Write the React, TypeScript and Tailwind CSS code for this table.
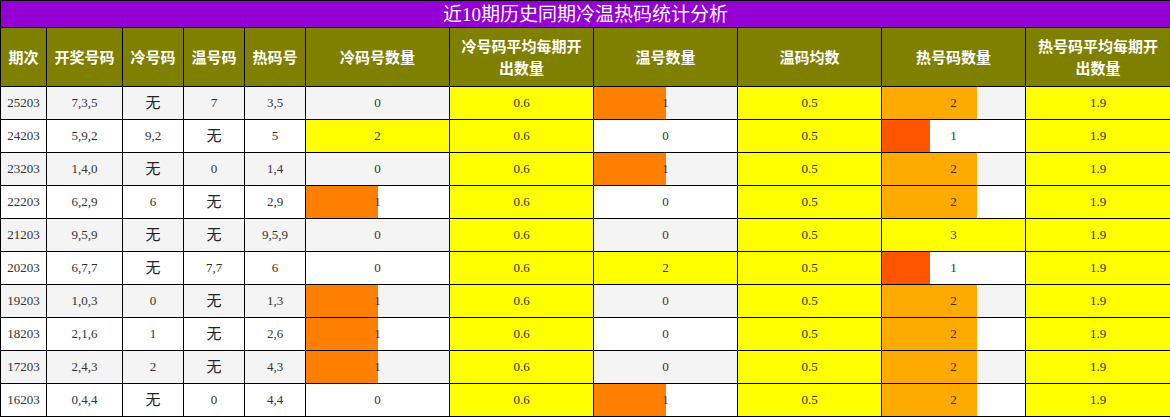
import React from "react";

type Row = {
  id: string;
  draw: string;
  cold: string;
  warm: string;
  hot: string;
  coldN: number;
  warmN: number;
  hotN: number;
};

const rows: Row[] = [
  { id: "25203", draw: "7,3,5", cold: "无", warm: "7", hot: "3,5", coldN: 0, warmN: 1, hotN: 2 },
  { id: "24203", draw: "5,9,2", cold: "9,2", warm: "无", hot: "5", coldN: 2, warmN: 0, hotN: 1 },
  { id: "23203", draw: "1,4,0", cold: "无", warm: "0", hot: "1,4", coldN: 0, warmN: 1, hotN: 2 },
  { id: "22203", draw: "6,2,9", cold: "6", warm: "无", hot: "2,9", coldN: 1, warmN: 0, hotN: 2 },
  { id: "21203", draw: "9,5,9", cold: "无", warm: "无", hot: "9,5,9", coldN: 0, warmN: 0, hotN: 3 },
  { id: "20203", draw: "6,7,7", cold: "无", warm: "7,7", hot: "6", coldN: 0, warmN: 2, hotN: 1 },
  { id: "19203", draw: "1,0,3", cold: "0", warm: "无", hot: "1,3", coldN: 1, warmN: 0, hotN: 2 },
  { id: "18203", draw: "2,1,6", cold: "1", warm: "无", hot: "2,6", coldN: 1, warmN: 0, hotN: 2 },
  { id: "17203", draw: "2,4,3", cold: "2", warm: "无", hot: "4,3", coldN: 1, warmN: 0, hotN: 2 },
  { id: "16203", draw: "0,4,4", cold: "无", warm: "0", hot: "4,4", coldN: 0, warmN: 1, hotN: 2 },
];

const headers = [
  "期次",
  "开奖号码",
  "冷号码",
  "温号码",
  "热码号",
  "冷码号数量",
  "冷号码平均每期开出数量",
  "温号数量",
  "温码均数",
  "热号码数量",
  "热号码平均每期开出数量",
];

const widths = [46, 76, 61, 61, 61, 144, 144, 144, 144, 144, 145];

// bar look per value, keyed by "max/value"
const bars: Record<string, string> = {
  "2/1": "w-1/2 bg-[#ff8000]",
  "2/2": "w-full bg-[#ffff00]",
  "3/1": "w-1/3 bg-[#ff5500]",
  "3/2": "w-2/3 bg-[#ffaa00]",
  "3/3": "w-full bg-[#ffff00]",
};

function Cell({ children, className = "" }: { children: React.ReactNode; className?: string }) {
  return (
    <td className={`border border-black p-0 text-center align-middle ${className}`}>{children}</td>
  );
}

function Code({ v }: { v: string }) {
  if (v === "无") return <span className="text-[15px] text-[#222]">无</span>;
  return <>{v}</>;
}

function BarCell({ value, max }: { value: number; max: number }) {
  const bar = bars[`${max}/${value}`];
  return (
    <td className="relative border border-black p-0 text-center align-middle">
      {bar && <div className={`absolute inset-y-0 left-0 ${bar}`} />}
      <span className="relative">{value}</span>
    </td>
  );
}

export default function App() {
  return (
    <div className="w-[1170px] bg-white">
      <table
        className="w-[1170px] table-fixed border-collapse text-[13px] text-[#333]"
        style={{ fontFamily: '"Liberation Serif", "Noto Sans CJK SC", serif' }}
      >
        <colgroup>
          {widths.map((w, i) => (
            <col key={i} style={{ width: w }} />
          ))}
        </colgroup>
        <thead>
          <tr className="h-[27px]">
            <th
              colSpan={11}
              className="border border-black bg-[#9400d3] p-0 text-center text-[19px] font-normal leading-[25px] text-white"
            >
              近10期历史同期冷温热码统计分析
            </th>
          </tr>
          <tr className="h-[59px]">
            {headers.map((h, i) => (
              <th
                key={h}
                className={`border border-black bg-[#808000] text-center align-middle text-[15px] font-bold leading-[22px] text-white ${
                  i < 5 ? "px-0 whitespace-nowrap" : "px-2"
                }`}
                style={{ fontFamily: '"Noto Sans CJK SC", sans-serif' }}
              >
                {h}
              </th>
            ))}
          </tr>
        </thead>
        <tbody>
          {rows.map((r, i) => (
            <tr key={r.id} className={`h-[33px] ${i % 2 === 0 ? "bg-[#f4f4f4]" : "bg-white"}`}>
              <Cell>{r.id}</Cell>
              <Cell>{r.draw}</Cell>
              <Cell>
                <Code v={r.cold} />
              </Cell>
              <Cell>
                <Code v={r.warm} />
              </Cell>
              <Cell>
                <Code v={r.hot} />
              </Cell>
              <BarCell value={r.coldN} max={2} />
              <Cell className="bg-[#ffff00]">0.6</Cell>
              <BarCell value={r.warmN} max={2} />
              <Cell className="bg-[#ffff00]">0.5</Cell>
              <BarCell value={r.hotN} max={3} />
              <Cell className="bg-[#ffff00]">1.9</Cell>
            </tr>
          ))}
        </tbody>
      </table>
    </div>
  );
}
